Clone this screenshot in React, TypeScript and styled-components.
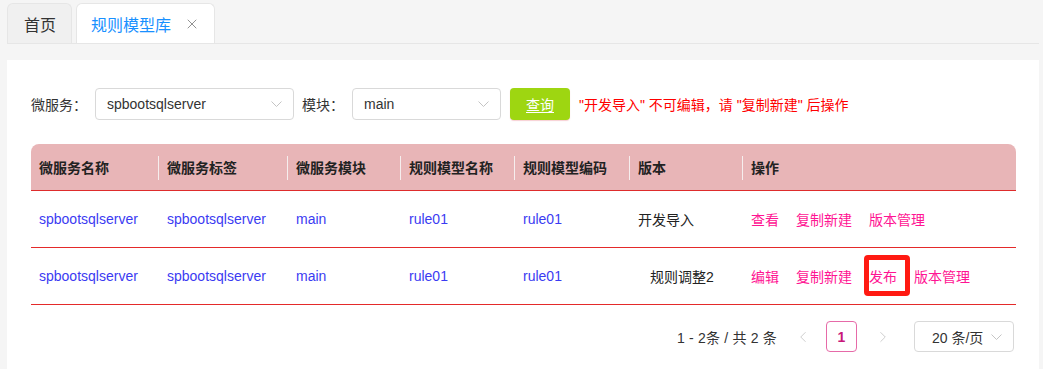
import styled, { createGlobalStyle } from "styled-components";
import { ChevronLeft, ChevronRight, X } from "lucide-react";

const GlobalStyle = createGlobalStyle`
  html, body {
    margin: 0;
    padding: 0;
    background: #f5f5f5;
    font-family: "Liberation Sans", "Noto Sans CJK SC", sans-serif;
    font-size: 14px;
    color: #333;
  }
`;

type Row = {
  name: string;
  tag: string;
  module: string;
  ruleName: string;
  ruleCode: string;
  version: string;
  versionIndent?: boolean;
  actions: { label: string; marked?: boolean }[];
};

const rows: Row[] = [
  {
    name: "spbootsqlserver",
    tag: "spbootsqlserver",
    module: "main",
    ruleName: "rule01",
    ruleCode: "rule01",
    version: "开发导入",
    actions: [{ label: "查看" }, { label: "复制新建" }, { label: "版本管理" }],
  },
  {
    name: "spbootsqlserver",
    tag: "spbootsqlserver",
    module: "main",
    ruleName: "rule01",
    ruleCode: "rule01",
    version: "规则调整2",
    versionIndent: true,
    actions: [
      { label: "编辑" },
      { label: "复制新建" },
      { label: "发布", marked: true },
      { label: "版本管理" },
    ],
  },
];

const headers = [
  { label: "微服务名称", width: 127 },
  { label: "微服务标签", width: 129 },
  { label: "微服务模块", width: 113 },
  { label: "规则模型名称", width: 114 },
  { label: "规则模型编码", width: 115 },
  { label: "版本", width: 113 },
  { label: "操作", width: undefined },
];

function Caret() {
  return (
    <svg width="11" height="6" viewBox="0 0 11 6" fill="none">
      <polyline points="0.5,0.5 5.5,5.5 10.5,0.5" stroke="#c4c4c4" strokeWidth="1" />
    </svg>
  );
}

export default function App() {
  return (
    <>
      <GlobalStyle />
      <Page>
        <TabBar>
          <Tab>首页</Tab>
          <Tab $active>
            规则模型库
            <X size={16} strokeWidth={1.4} color="#8a8a8a" />
          </Tab>
        </TabBar>
        <Panel>
          <FilterRow>
            <Label>微服务：</Label>
            <Select $width={199}>
              <span>spbootsqlserver</span>
              <Caret />
            </Select>
            <Label>模块：</Label>
            <Select $width={149}>
              <span>main</span>
              <Caret />
            </Select>
            <QueryButton>查询</QueryButton>
            <Warning>"开发导入" 不可编辑，请 "复制新建" 后操作</Warning>
          </FilterRow>

          <Table>
            <colgroup>
              {headers.map((h) => (
                <col key={h.label} style={h.width ? { width: h.width } : undefined} />
              ))}
            </colgroup>
            <thead>
              <tr>
                {headers.map((h, i) => (
                  <HeadCell key={h.label} $first={i === 0}>
                    {h.label}
                  </HeadCell>
                ))}
              </tr>
            </thead>
            <tbody>
              {rows.map((r, idx) => (
                <tr key={idx}>
                  <Cell><DataLink>{r.name}</DataLink></Cell>
                  <Cell><DataLink>{r.tag}</DataLink></Cell>
                  <Cell><DataLink>{r.module}</DataLink></Cell>
                  <Cell><DataLink>{r.ruleName}</DataLink></Cell>
                  <Cell><DataLink>{r.ruleCode}</DataLink></Cell>
                  <Cell>
                    <Version $indent={r.versionIndent}>{r.version}</Version>
                  </Cell>
                  <Cell>
                    <Actions>
                      {r.actions.map((a) =>
                        a.marked ? (
                          <Marked key={a.label}>{a.label}</Marked>
                        ) : (
                          <ActionLink key={a.label}>{a.label}</ActionLink>
                        )
                      )}
                    </Actions>
                  </Cell>
                </tr>
              ))}
            </tbody>
          </Table>

          <Pager>
            <Total>1 - 2条 / 共 2 条</Total>
            <PagerArrow>
              <ChevronLeft size={18} strokeWidth={1.2} color="#c8c8c8" />
            </PagerArrow>
            <PageNumber>1</PageNumber>
            <PagerArrow>
              <ChevronRight size={18} strokeWidth={1.2} color="#c8c8c8" />
            </PagerArrow>
            <SizeSelect>
              <span>20 条/页</span>
              <Caret />
            </SizeSelect>
          </Pager>
        </Panel>
      </Page>
    </>
  );
}

const Page = styled.div`
  min-height: 100vh;
  padding: 0 4px 0 7px;
  box-sizing: border-box;
  display: flex;
  flex-direction: column;
`;

const TabBar = styled.div`
  display: flex;
  align-items: flex-end;
  gap: 4px;
  height: 44px;
  padding-top: 4px;
  box-sizing: border-box;
  border-bottom: 1px solid #e6e6e6;
`;

const Tab = styled.div<{ $active?: boolean }>`
  display: flex;
  align-items: center;
  gap: 13px;
  height: 40px;
  box-sizing: border-box;
  padding: ${(p) => (p.$active ? "0 14px 0 14px" : "0 15px 0 16px")};
  font-size: 16px;
  color: ${(p) => (p.$active ? "#1890ff" : "#333")};
  background: ${(p) => (p.$active ? "#fff" : "#f0f0f0")};
  border: 1px solid #e6e6e6;
  border-bottom: none;
  border-radius: 6px 6px 0 0;
`;

const Panel = styled.div`
  flex: 1;
  margin-top: 16px;
  background: #fff;
  padding: 28px 23px 0 24px;
`;

const FilterRow = styled.div`
  display: flex;
  align-items: center;
  height: 32px;
`;

const Label = styled.span`
  font-size: 14px;
  color: #333;
  margin-right: 8px;
  &:not(:first-child) {
    margin-left: 8px;
  }
`;

const Select = styled.div<{ $width: number }>`
  width: ${(p) => p.$width}px;
  height: 32px;
  box-sizing: border-box;
  display: flex;
  align-items: center;
  justify-content: space-between;
  padding: 0 11px 0 11px;
  border: 1px solid #d9d9d9;
  border-radius: 4px;
  color: #333;
  font-size: 14px;
`;

const QueryButton = styled.button`
  margin-left: 9px;
  width: 60px;
  height: 32px;
  border: none;
  border-radius: 4px;
  background: #9ed611;
  color: #fff;
  font-family: inherit;
  font-size: 14px;
  text-decoration: underline;
  text-underline-offset: 2px;
  box-shadow: 0 1px 1px rgba(240, 160, 170, 0.5);
`;

const Warning = styled.span`
  margin-left: 9px;
  color: #ff0000;
  font-size: 14px;
`;

const Table = styled.table`
  width: 100%;
  margin-top: 24px;
  border-collapse: separate;
  border-spacing: 0;
  table-layout: fixed;
`;

const HeadCell = styled.th<{ $first?: boolean }>`
  position: relative;
  height: 46px;
  padding: 0 9px;
  text-align: left;
  font-size: 14px;
  font-weight: bold;
  color: #222;
  background: #e8b5b7;
  border-bottom: 1px solid #de2c2c;
  white-space: nowrap;
  &:first-child {
    padding-left: 8px;
    border-top-left-radius: 8px;
  }
  &:last-child {
    border-top-right-radius: 8px;
  }
  &::before {
    content: "";
    display: ${(p) => (p.$first ? "none" : "block")};
    position: absolute;
    left: 0;
    top: 12px;
    height: 24px;
    width: 1px;
    background: #f6eeee;
  }
`;

const Cell = styled.td`
  height: 56px;
  padding: 0 9px;
  border-bottom: 1px solid #e42a2a;
  font-size: 14px;
  white-space: nowrap;
  &:first-child {
    padding-left: 8px;
  }
`;

const DataLink = styled.span`
  color: #3b3bf2;
`;

const Version = styled.span<{ $indent?: boolean }>`
  color: #222;
  padding-left: ${(p) => (p.$indent ? "12px" : "0")};
`;

const Actions = styled.div`
  display: flex;
  align-items: center;
  gap: 17px;
`;

const ActionLink = styled.span`
  color: #ff1493;
`;

const Marked = styled.span`
  color: #ff1493;
  margin: -12px -13px -10px -5px;
  padding: 6px 8px 5px 0;
  border: 5px solid #ff1a12;
  border-radius: 4px;
`;

const Pager = styled.div`
  display: flex;
  align-items: center;
  justify-content: flex-end;
  margin-top: 16px;
  padding-right: 2px;
  height: 31px;
`;

const Total = styled.span`
  color: #333;
  font-size: 14px;
  letter-spacing: 0.2px;
  margin-right: 17px;
`;

const PagerArrow = styled.span`
  display: flex;
  align-items: center;
  justify-content: center;
  width: 18px;
`;

const PageNumber = styled.span`
  width: 31px;
  height: 31px;
  box-sizing: border-box;
  margin: 0 17px 0 14px;
  display: flex;
  align-items: center;
  justify-content: center;
  border: 1px solid #e66aa8;
  border-radius: 4px;
  color: #c8187a;
  font-weight: bold;
  font-size: 14px;
`;

const SizeSelect = styled.div`
  width: 100px;
  height: 31px;
  box-sizing: border-box;
  margin-left: 22px;
  display: flex;
  align-items: center;
  justify-content: space-between;
  padding: 0 11px 0 17px;
  border: 1px solid #d9d9d9;
  border-radius: 4px;
  color: #333;
  font-size: 14px;
`;
